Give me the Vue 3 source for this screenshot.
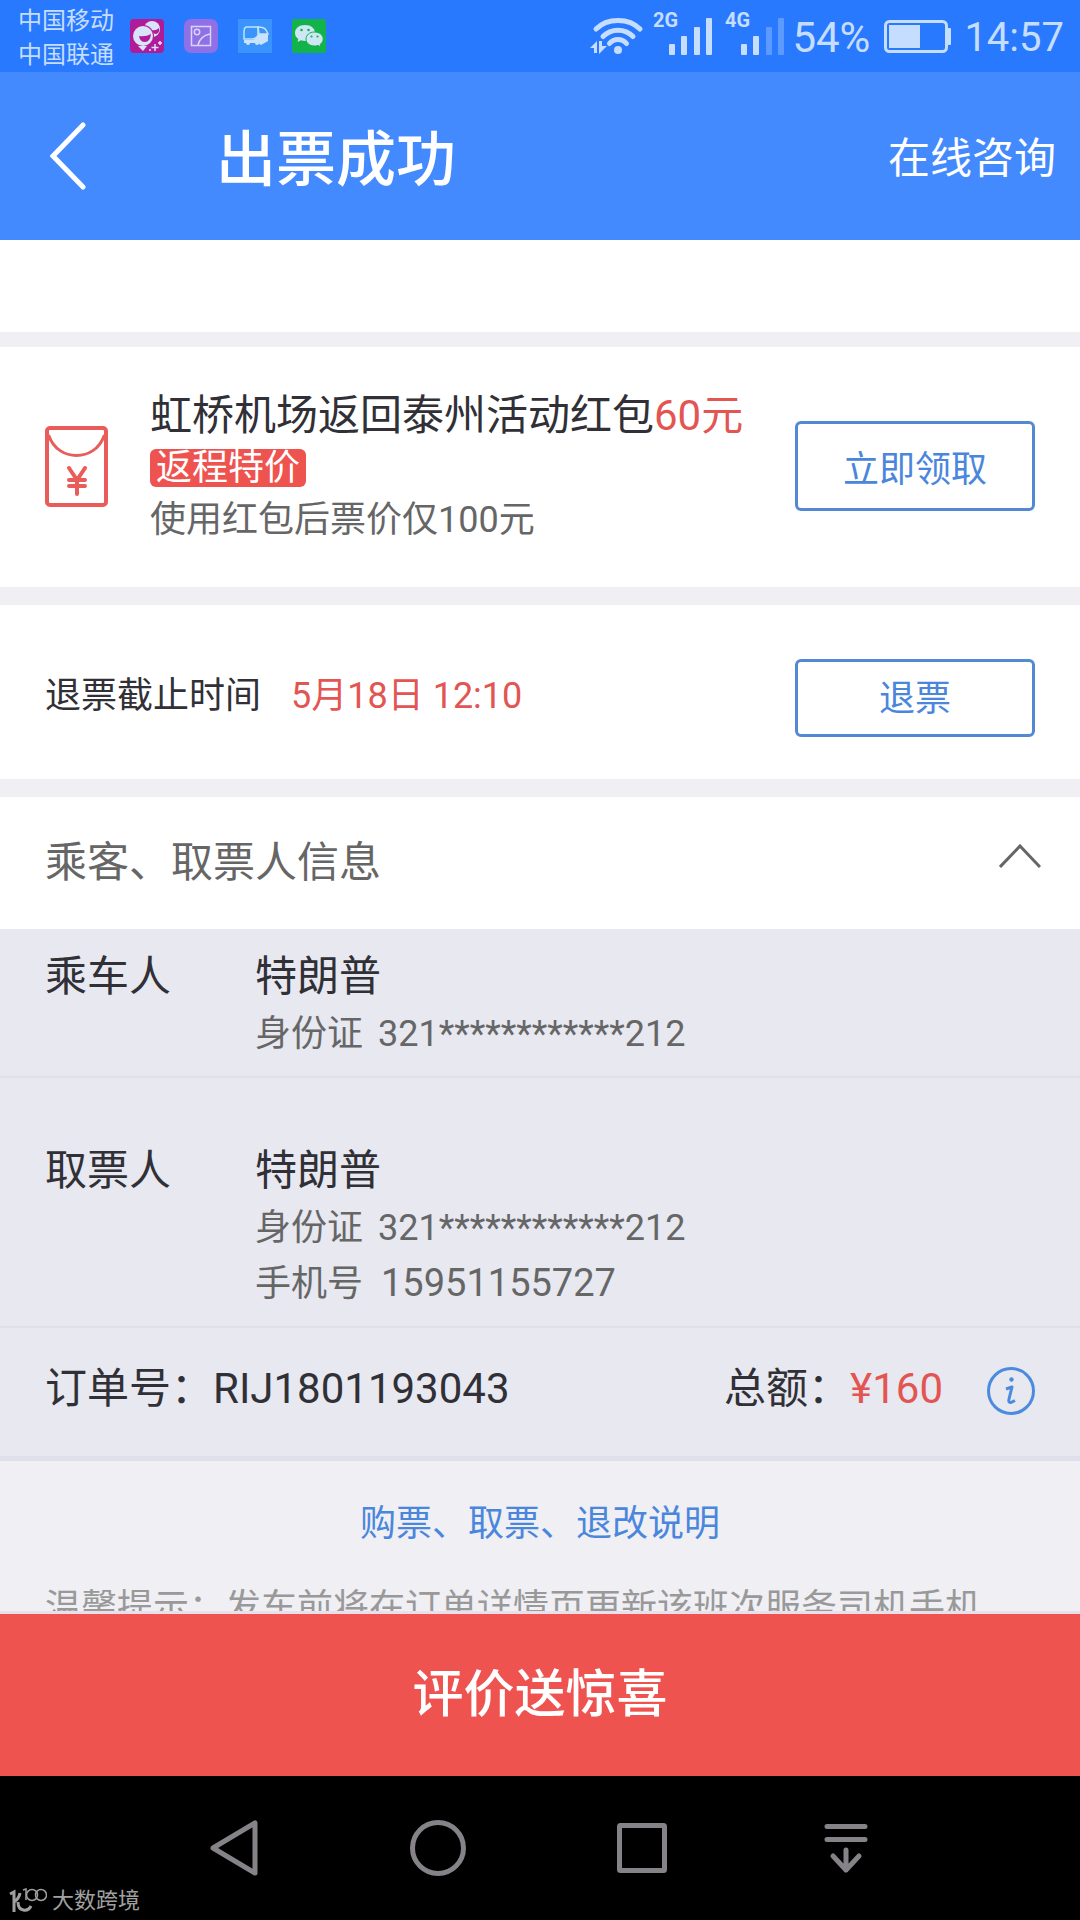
<script setup>
const carriers = ['中国移动', '中国联通']

const signals = [
  { network: '2G', strength: 4 },
  { network: '4G', strength: 2 },
]
const bars = [
  { x: 16, y: 34, h: 11 },
  { x: 28, y: 26, h: 19 },
  { x: 41, y: 17, h: 28 },
  { x: 53, y: 8, h: 37 },
]

const people = [
  {
    role: '乘车人',
    name: '特朗普',
    details: [{ label: '身份证', value: '321************212' }],
  },
  {
    role: '取票人',
    name: '特朗普',
    details: [
      { label: '身份证', value: '321************212' },
      { label: '手机号', value: '15951155727', large: true },
    ],
  },
]
</script>

<template>
  <div class="app">
    <div class="status">
      <div class="carriers">
        <span v-for="c in carriers" :key="c">{{ c }}</span>
      </div>
      <div class="notices">
        <svg viewBox="0 0 34 34">
          <rect width="34" height="34" rx="4" fill="#b01c98" />
          <circle cx="22" cy="10" r="8" fill="#d9e4fb" />
          <path d="M22 11q4 1 7-2q1 5-3 6q-3 0-4-4z" fill="#b01c98" />
          <circle cx="13" cy="17" r="11" fill="#b01c98" />
          <circle cx="13" cy="17" r="10" fill="#d9e4fb" />
          <path d="M9 17q7 1 12-2q-1 8-6 8q-5 0-6-6z" fill="#b01c98" />
          <path d="M8 27h9l-4 5z" fill="#d9e4fb" />
          <path d="M25 25v7M21.500 28.500h7M30 22v4M28 24h4M19 31h2" stroke="#d9e4fb" stroke-width="1.500" />
        </svg>
        <svg viewBox="0 0 34 34">
          <rect width="34" height="34" rx="7" fill="#9070e6" />
          <g fill="none" stroke="#d6d4fb" stroke-width="1.500">
            <rect x="7.500" y="7.500" width="19" height="19" />
            <circle cx="13" cy="13" r="2.700" />
            <path d="M14 26q2-9 12-11" />
          </g>
        </svg>
        <svg viewBox="0 0 34 34">
          <rect width="34" height="34" fill="#3a94fc" />
          <path d="M20 8H8q-2 1-2 4v8h8q6-1 6-5z" fill="none" stroke="#bfe2fd" stroke-width="1.500" />
          <path d="M20 8q6 0 8 3l2 4h-9z" fill="none" stroke="#bfe2fd" stroke-width="1.500" />
          <path d="M21 15h9v7l-7 4l-3-2H6v-3h8q5-1 7-6z" fill="#c9e3fd" />
          <circle cx="10" cy="24" r="2" fill="#c9e3fd" />
          <circle cx="19" cy="24" r="2" fill="#c9e3fd" />
        </svg>
        <svg viewBox="0 0 34 34">
          <rect width="34" height="34" rx="2" fill="#12b34b" />
          <path d="M13 6C7 6 3 9.500 3 14c0 2.500 1.300 4.500 3.300 6L5.500 23l3.500-1.700q2 .7 4 .7c6 0 10-3.500 10-8S19 6 13 6z" fill="#cfe6f5" />
          <circle cx="9.500" cy="11" r="1.300" fill="#12b34b" />
          <circle cx="16.500" cy="11" r="1.300" fill="#12b34b" />
          <path d="M22.500 13c-5 0-8.500 3-8.500 7s3.500 7 8.500 7q2 0 3.500-.6L29 28l-.8-2.800c2-1.300 3-3 3-5.200 0-4-3.700-7-8.700-7z" fill="#cfe6f5" stroke="#12b34b" stroke-width="1" />
          <circle cx="19.500" cy="17.500" r="1.100" fill="#12b34b" />
          <circle cx="25.500" cy="17.500" r="1.100" fill="#12b34b" />
        </svg>
      </div>
      <div class="system">
        <svg class="wifi" viewBox="0 0 54 38">
          <g fill="none" stroke="#c5deff" stroke-width="5" stroke-linecap="round">
            <path d="M6 12C17 .5 39 .5 50 12" />
            <path d="M13 19.500C21 11 35 11 43 19.500" />
            <path d="M19.500 26.500C24 21 32 21 36.500 26.500" />
          </g>
          <circle cx="28" cy="33" r="4" fill="#c5deff" />
          <path d="M0 31l7-7v12H4v-5zM9 24h3v5h5l-8 8z" fill="#c5deff" />
        </svg>
        <svg v-for="s in signals" :key="s.network" class="signal" viewBox="0 0 60 46">
          <text x="0" y="17" class="network">{{ s.network }}</text>
          <rect
            v-for="(b, i) in bars"
            :key="b.x"
            :x="b.x"
            :y="b.y"
            width="6"
            :height="b.h"
            rx="1"
            :fill="i < s.strength ? '#c5deff' : '#5c9aff'"
          />
        </svg>
        <span class="percent">54%</span>
        <svg class="battery" viewBox="0 0 67 34">
          <rect x="1.500" y="1.500" width="61" height="30" rx="4" fill="none" stroke="#c5deff" stroke-width="3" />
          <rect x="5" y="5" width="31" height="23" fill="#c5deff" />
          <rect x="63" y="8" width="4" height="17" rx="1" fill="#c5deff" />
        </svg>
        <time>14:57</time>
      </div>
    </div>

    <header class="header">
      <button class="back" aria-label="返回">
        <svg viewBox="0 0 36 68">
          <path d="M33 3L3 34l30 31" fill="none" stroke="#fff" stroke-width="5" stroke-linecap="round" />
        </svg>
      </button>
      <h1>出票成功</h1>
      <a href="#consult">在线咨询</a>
    </header>

    <main class="content">
      <section class="spacer"></section>

      <section class="coupon">
        <svg class="envelope" viewBox="0 0 63 81">
          <g fill="none" stroke="#ea5c5a" stroke-width="4" stroke-linecap="round">
            <rect x="2" y="2" width="59" height="77" rx="3" />
            <path d="M4 10C13 36 50 36 59 10" stroke-width="3" />
            <path d="M24 42l8 12l8-12M32 54v14M24 54h16M24 60h16" />
          </g>
        </svg>
        <div class="coupon-text">
          <h2>虹桥机场返回泰州活动红包<em>60元</em></h2>
          <span class="badge">返程特价</span>
          <p>使用红包后票价仅100元</p>
        </div>
        <button class="outline tall">立即领取</button>
      </section>

      <section class="refund">
        <p>退票截止时间<time>5月18日 12:10</time></p>
        <button class="outline">退票</button>
      </section>

      <section class="info">
        <button class="info-head" aria-expanded="true">
          <span>乘客、取票人信息</span>
          <svg viewBox="0 0 42 24">
            <path d="M1 23L21 2l20 21" fill="none" stroke="#666" stroke-width="3" />
          </svg>
        </button>
        <div v-for="p in people" :key="p.role" class="person">
          <span class="role">{{ p.role }}</span>
          <div>
            <strong>{{ p.name }}</strong>
            <p v-for="d in p.details" :key="d.label">
              <span>{{ d.label }}</span>
              <span :class="{ large: d.large }">{{ d.value }}</span>
            </p>
          </div>
        </div>
        <div class="order">
          <span>订单号：RIJ1801193043</span>
          <span class="total">总额：<em>¥160</em></span>
          <button class="detail" aria-label="费用明细">
            <svg viewBox="0 0 48 48" fill="none" stroke="#4a8be0">
              <circle cx="24" cy="24" r="22.500" stroke-width="3" />
              <circle cx="24.500" cy="12.500" r="2.200" fill="#4a8be0" stroke="none" />
              <path d="M19 22l6-2l-3 12q-1 4 2 3.500l4-2" stroke-width="3" stroke-linejoin="round" />
            </svg>
          </button>
        </div>
      </section>

      <section class="help">
        <a href="#rules">购票、取票、退改说明</a>
        <p>温馨提示：发车前将在订单详情页更新该班次服务司机手机</p>
      </section>
    </main>

    <button class="review">评价送惊喜</button>

    <nav class="nav">
      <button aria-label="返回">
        <svg viewBox="0 0 60 60"><path d="M9 30L51 5v50z" /></svg>
      </button>
      <button aria-label="主屏幕">
        <svg viewBox="0 0 60 60"><circle cx="30" cy="30" r="25.500" /></svg>
      </button>
      <button aria-label="最近任务">
        <svg viewBox="0 0 60 60"><rect x="7.500" y="7.500" width="45" height="45" rx="1" /></svg>
      </button>
      <button aria-label="下拉通知">
        <svg viewBox="0 0 60 60"><path d="M11 8.500h38M11 21.500h38M30 32v20M17 38l13 14l13-14" /></svg>
      </button>
      <div class="mark">
        <svg viewBox="0 0 38 26" fill="none" stroke="#a0a0a0">
          <path d="M1 6l4-2v20M11 5q-1 6-6 9M9 14c0 10 10 10 13 4" stroke-width="3" />
          <path d="M14 2l3-1v11" stroke-width="1.500" />
          <circle cx="23" cy="7" r="5.500" stroke-width="1.500" />
          <circle cx="32" cy="7" r="5.500" stroke-width="1.500" />
        </svg>
        <span>大数跨境</span>
      </div>
    </nav>
  </div>
</template>

<style>
body {
  margin: 0;
}
</style>

<style scoped>
.app {
  display: flex;
  flex-direction: column;
  height: 100vh;
  overflow: hidden;
  background: #efeff4;
  color: #303036;
  font-family: Roboto, "Noto Sans CJK SC", sans-serif;
  font-size: 36px;
  line-height: 1.2;
}
h1, h2, p {
  margin: 0;
  font-weight: 400;
}
svg {
  display: block;
  flex: none;
}
em {
  font-style: normal;
  color: #e35552;
}
a {
  text-decoration: none;
}
button {
  margin: 0;
  padding: 0;
  border: 0;
  background: none;
  color: inherit;
  font: inherit;
}

.status {
  flex: none;
  display: flex;
  align-items: center;
  height: 72px;
  padding: 0 16px 0 18px;
  background: #2979ff;
  color: #c5deff;
}
.carriers {
  display: flex;
  flex-direction: column;
  padding-top: 4px;
  font-size: 24px;
  line-height: 34px;
}
.notices {
  display: flex;
  gap: 20px;
  margin-left: 16px;
}
.notices svg {
  width: 34px;
  height: 34px;
}
.system {
  display: flex;
  align-items: center;
  margin-left: auto;
  font-size: 40px;
}
.system span,
.system time {
  padding-top: 4px;
}
.wifi {
  width: 54px;
  height: 38px;
}
.signal {
  width: 60px;
  height: 46px;
  margin: 0 3px 6px 9px;
  overflow: visible;
}
.network {
  font-size: 20px;
  font-weight: 700;
  fill: #c5deff;
}
.percent {
  margin: 0 14px 0 4px;
  font-size: 42px;
}
.battery {
  width: 67px;
  height: 34px;
  margin: 3px 13px 0 0;
}

.header {
  flex: none;
  display: flex;
  align-items: center;
  height: 168px;
  padding: 0 24px 0 50px;
  background: #448aff;
  color: #fff;
}
.back svg {
  width: 36px;
  height: 68px;
}
.header h1 {
  margin-left: 130px;
  padding-top: 10px;
  font-size: 60px;
  font-weight: 500;
}
.header a {
  margin-left: auto;
  padding-top: 6px;
  color: #fff;
  font-size: 42px;
}

.content {
  flex: 1;
  min-height: 0;
  overflow: hidden;
}
.spacer {
  height: 92px;
  background: #fff;
}
.coupon {
  display: flex;
  align-items: center;
  margin-top: 15px;
  padding: 40px 45px 42px;
  background: #fff;
}
.envelope {
  width: 63px;
  height: 81px;
}
.coupon-text {
  flex: 1;
  display: flex;
  flex-direction: column;
  align-items: flex-start;
  gap: 8px;
  margin-left: 42px;
  padding-top: 4px;
}
.coupon h2 {
  font-size: 42px;
  line-height: 50px;
  white-space: nowrap;
}
.badge {
  padding: 0 6px;
  border-radius: 6px;
  background: #ee5350;
  color: #fff;
  line-height: 38px;
}
.coupon p {
  color: #666;
  line-height: 50px;
}
.outline {
  flex: none;
  box-sizing: border-box;
  width: 240px;
  height: 78px;
  padding-top: 4px;
  border: 3px solid #5289d2;
  border-radius: 6px;
  color: #4a86dc;
}
.tall {
  height: 90px;
  padding-top: 10px;
}
.refund {
  display: flex;
  justify-content: space-between;
  margin-top: 18px;
  padding: 54px 45px 42px;
  background: #fff;
}
.refund p {
  line-height: 74px;
}
.refund time {
  margin-left: 30px;
  color: #e35552;
}

.info {
  margin-top: 18px;
  background: #e7e8f0;
}
.info-head {
  display: flex;
  align-items: center;
  justify-content: space-between;
  width: 100%;
  height: 132px;
  padding: 0 39px 0 45px;
  background: #fff;
  color: #666;
  font-size: 42px;
}
.info-head svg {
  width: 42px;
  height: 24px;
  margin-bottom: 14px;
}
.person {
  display: flex;
  padding: 18px 45px 14px;
  border-bottom: 2px solid #dfe0e8;
  line-height: 60px;
}
.person + .person {
  padding-top: 63px;
}
.role {
  width: 210px;
  font-size: 42px;
}
.person strong {
  display: block;
  font-size: 42px;
  font-weight: 400;
}
.person p {
  display: flex;
  align-items: baseline;
  gap: 15px;
  color: #666;
  line-height: 55px;
}
.person .large {
  padding-left: 3px;
  font-size: 38px;
}
.order {
  display: flex;
  align-items: center;
  height: 126px;
  padding: 0 45px 2px;
  border-bottom: 5px solid #dfe0ea;
  font-size: 42px;
}
.order span {
  padding-bottom: 4px;
}
.total {
  margin-left: auto;
}
.detail {
  margin-left: 44px;
}
.detail svg {
  width: 48px;
  height: 48px;
}

.help {
  display: flex;
  flex-direction: column;
  align-items: center;
  gap: 30px;
  padding: 36px 45px;
  line-height: 54px;
}
.help a {
  color: #4a86dc;
}
.help p {
  align-self: stretch;
  color: #999;
  white-space: nowrap;
}

.review {
  flex: none;
  height: 165px;
  border-top: 3px solid #e9dfea;
  background: #ee5350;
  color: #fff;
  font-size: 51px;
  font-weight: 500;
}
.nav {
  position: relative;
  flex: none;
  display: flex;
  justify-content: center;
  height: 144px;
  background: #000;
}
.nav button {
  display: flex;
  align-items: center;
  justify-content: center;
  width: 204px;
}
.nav button svg {
  width: 60px;
  height: 60px;
  fill: none;
  stroke: #858387;
  stroke-width: 5;
  stroke-linecap: round;
  stroke-linejoin: round;
}
.mark {
  position: absolute;
  left: 9px;
  bottom: 5px;
  display: flex;
  align-items: center;
  gap: 5px;
  color: #a0a0a0;
  font-size: 22px;
  line-height: 28px;
}
.mark svg {
  width: 38px;
  height: 26px;
}
</style>
